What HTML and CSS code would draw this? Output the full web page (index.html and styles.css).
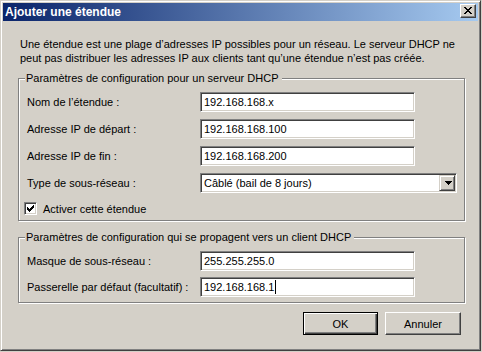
FILE: index.html
```html
<!DOCTYPE html>
<html lang="fr">
<head>
<meta charset="utf-8">
<title>Ajouter une étendue</title>
<link rel="stylesheet" href="styles.css">
</head>
<body>
<div class="window">
  <div class="titlebar">
    <span class="title">Ajouter une étendue</span>
    <span class="close">
      <svg width="8" height="7" viewBox="0 0 8 7" shape-rendering="crispEdges">
        <rect x="0" y="0" width="2" height="1"/><rect x="6" y="0" width="2" height="1"/>
        <rect x="1" y="1" width="2" height="1"/><rect x="5" y="1" width="2" height="1"/>
        <rect x="2" y="2" width="4" height="1"/>
        <rect x="3" y="3" width="2" height="1"/>
        <rect x="2" y="4" width="4" height="1"/>
        <rect x="1" y="5" width="2" height="1"/><rect x="5" y="5" width="2" height="1"/>
        <rect x="0" y="6" width="2" height="1"/><rect x="6" y="6" width="2" height="1"/>
      </svg>
    </span>
  </div>
  <div class="content">
    <p class="intro">Une étendue est une plage d’adresses IP possibles pour un réseau. Le serveur DHCP ne<br>peut pas distribuer les adresses IP aux clients tant qu’une étendue n’est pas créée.</p>

    <fieldset class="group">
      <legend>Paramètres de configuration pour un serveur DHCP</legend>
      <div class="form">
        <span class="label">Nom de l’étendue :</span>
        <div class="field">192.168.168.x</div>
        <span class="label">Adresse IP de départ :</span>
        <div class="field">192.168.168.100</div>
        <span class="label">Adresse IP de fin :</span>
        <div class="field">192.168.168.200</div>
        <span class="label">Type de sous-réseau :</span>
        <div class="combo">
          <span class="combo-value">Câblé (bail de 8 jours)</span>
          <span class="drop">
            <svg width="7" height="4" viewBox="0 0 7 4" shape-rendering="crispEdges">
              <rect x="0" y="0" width="7" height="1"/><rect x="1" y="1" width="5" height="1"/>
              <rect x="2" y="2" width="3" height="1"/><rect x="3" y="3" width="1" height="1"/>
            </svg>
          </span>
        </div>
        <div class="check-row">
          <span class="checkbox">
            <svg width="7" height="7" viewBox="0 0 7 7" shape-rendering="crispEdges">
              <rect x="0" y="2" width="1" height="3"/><rect x="1" y="3" width="1" height="3"/>
              <rect x="2" y="4" width="1" height="3"/><rect x="3" y="3" width="1" height="3"/>
              <rect x="4" y="2" width="1" height="3"/><rect x="5" y="1" width="1" height="3"/>
              <rect x="6" y="0" width="1" height="3"/>
            </svg>
          </span>
          <span>Activer cette étendue</span>
        </div>
      </div>
    </fieldset>

    <fieldset class="group group2">
      <legend>Paramètres de configuration qui se propagent vers un client DHCP</legend>
      <div class="form form2">
        <span class="label">Masque de sous-réseau :</span>
        <div class="field">255.255.255.0</div>
        <span class="label">Passerelle par défaut (facultatif) :</span>
        <div class="field">192.168.168.1<span class="caret"></span></div>
      </div>
    </fieldset>

    <div class="buttons">
      <span class="btn default">OK</span>
      <span class="btn">Annuler</span>
    </div>
  </div>
</div>
</body>
</html>
```
FILE: styles.css
```css
* { box-sizing: border-box; }
html, body {
  margin: 0;
  padding: 0;
  background: #d4d0c8;
}
body {
  font-family: "Liberation Sans", Arial, sans-serif;
  font-size: 11px;
  color: #000;
}
.window {
  width: 481px;
  height: 351px;
  border: 1px solid;
  border-color: #d4d0c8 #404040 #404040 #d4d0c8;
  box-shadow: inset 1px 1px 0 #fff, inset -1px -1px 0 #808080;
  padding: 2px;
  background: #d4d0c8;
  display: flex;
  flex-direction: column;
}
.titlebar {
  height: 18px;
  flex: none;
  display: flex;
  align-items: flex-start;
  background: linear-gradient(to right, #0a246a, #a6caf0);
}
.title {
  flex: 1;
  padding-left: 2px;
  line-height: 18px;
  font-size: 12px;
  font-weight: bold;
  color: #fff;
}
.close {
  width: 16px;
  height: 14px;
  margin: 1px 2px 0 0;
  border: 1px solid;
  border-color: #fff #404040 #404040 #fff;
  box-shadow: inset -1px -1px 0 #808080;
  background: #d4d0c8;
  display: flex;
  align-items: flex-start;
  padding: 2px 0 0 3px;
}
.close svg, .drop svg, .checkbox svg { display: block; }
.content {
  flex: 1;
  padding: 16px 13px 0 15px;
  display: flex;
  flex-direction: column;
}
.intro {
  margin: 0 0 6px 2px;
  line-height: 14px;
}
.group {
  margin: 0;
  min-width: 0;
  padding: 7px 8px 4px 8px;
  border: 1px solid #808080;
  box-shadow: inset 1px 1px 0 #fff, 1px 1px 0 #fff;
}
.group legend {
  margin-left: -2px;
  padding: 0 3px 0 1px;
  line-height: 14px;
  background: #d4d0c8;
}
.group2 {
  margin-top: 9px;
  padding-bottom: 5px;
}
.form {
  display: grid;
  grid-template-columns: 173px max-content;
  row-gap: 7px;
  align-items: center;
}
.form2 { row-gap: 6px; }
.label { white-space: nowrap; }
.field {
  width: 215px;
  height: 20px;
  background: #fff;
  border: 1px solid;
  border-color: #808080 #fff #fff #808080;
  box-shadow: inset 1px 1px 0 #404040, inset -1px -1px 0 #d4d0c8;
  padding: 0 2px 0 3px;
  line-height: 18px;
  display: flex;
  align-items: center;
}
.caret {
  width: 1px;
  height: 14px;
  background: #000;
  margin-left: 1px;
}
.combo {
  width: 257px;
  height: 20px;
  background: #fff;
  border: 1px solid;
  border-color: #808080 #fff #fff #808080;
  box-shadow: inset 1px 1px 0 #404040, inset -1px -1px 0 #d4d0c8;
  padding: 1px;
  display: flex;
  align-items: center;
}
.combo-value {
  flex: 1;
  padding-left: 2px;
}
.drop {
  width: 16px;
  height: 16px;
  border: 1px solid;
  border-color: #d4d0c8 #404040 #404040 #d4d0c8;
  box-shadow: inset 1px 1px 0 #fff, inset -1px -1px 0 #808080;
  background: #d4d0c8;
  padding: 5px 0 0 5px;
}
.check-row {
  grid-column: 1 / -1;
  display: flex;
  align-items: center;
  gap: 6px;
  height: 15px;
  margin: 1px 0 0 -3px;
}
.checkbox {
  width: 13px;
  height: 13px;
  background: #fff;
  border: 1px solid;
  border-color: #808080 #fff #fff #808080;
  box-shadow: inset 1px 1px 0 #404040, inset -1px -1px 0 #d4d0c8;
  padding: 2px;
}
.buttons {
  display: flex;
  justify-content: flex-end;
  gap: 7px;
  margin-top: 9px;
  padding-right: 4px;
}
.btn {
  width: 75px;
  height: 23px;
  border: 1px solid;
  border-color: #fff #404040 #404040 #fff;
  box-shadow: inset -1px -1px 0 #808080;
  display: flex;
  align-items: center;
  justify-content: center;
}
.btn + .btn { width: 76px; }
.btn.default {
  border-color: #000;
  box-shadow: inset 1px 1px 0 #fff, inset -1px -1px 0 #404040, inset -2px -2px 0 #808080;
}
```
